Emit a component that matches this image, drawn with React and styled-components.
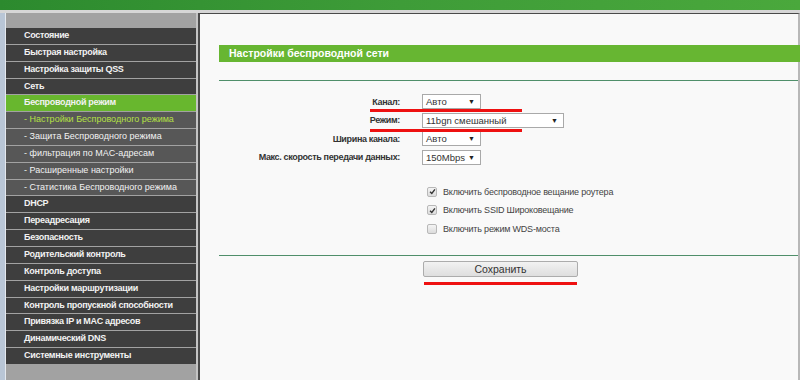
import React from "react";
import styled, { createGlobalStyle } from "styled-components";

const GlobalStyle = createGlobalStyle`
  html, body { margin: 0; padding: 0; }
  body {
    width: 800px;
    height: 380px;
    overflow: hidden;
    background: #f9f9f9;
    font-family: "Liberation Sans", Arial, sans-serif;
  }
`;

const Page = styled.div`
  width: 800px;
  height: 380px;
  display: flex;
  flex-direction: column;
`;

const TopBar = styled.div`
  height: 10px;
  background: linear-gradient(90deg, #2c8a2e 0%, #3e9c38 50%, #4aa83c 100%);
  border-bottom: 3px solid #d6d6d6;
`;

const Body = styled.div`
  flex: 1;
  display: flex;
`;

const EdgeStrip = styled.div`
  width: 5px;
  background: #b9c6d6;
  border-right: 1px solid #e4e8ee;
`;

const Sidebar = styled.nav`
  width: 190px;
  background: #a2a2a2;
  padding-top: 15px;
  display: flex;
  flex-direction: column;
  gap: 1px;
  border-right: 2px solid #c4c4c4;
`;

const MenuItem = styled.div`
  height: 15.85px;
  line-height: 15.85px;
  padding-left: 18px;
  font-size: 9px;
  font-weight: ${(p) => (p.$sub ? "normal" : "bold")};
  letter-spacing: ${(p) => (p.$sub ? "0" : "-0.3px")};
  color: ${(p) => (p.$current ? "#b4e046" : "#f2f2f2")};
  background: ${(p) => (p.$active ? "#68b72e" : p.$sub ? "#575757" : "#3e3e3e")};
  white-space: nowrap;
`;

const Main = styled.main`
  flex: 1;
  border-left: 2px solid #4a4a4a;
  border-top: 1px solid #4a4a4a;
  border-right: 2px solid #b8b8b8;
  padding: 31px 0 0 19px;
  display: flex;
  flex-direction: column;
`;

const TitleBar = styled.div`
  height: 17px;
  line-height: 17px;
  margin-right: -3px;
  padding-left: 10px;
  background: #67b632;
  color: #fff;
  font-size: 10.5px;
  font-weight: bold;
`;

const GreenRule = styled.div`
  height: 1px;
  background: #4f8f6a;
  margin-top: ${(p) => p.$top}px;
`;

const Form = styled.div`
  position: relative;
  display: grid;
  grid-template-columns: 181px auto;
  column-gap: 22px;
  row-gap: 3.5px;
  align-items: center;
  padding-top: 13px;
`;

const Label = styled.div`
  text-align: right;
  font-size: 9px;
  font-weight: bold;
  letter-spacing: -0.35px;
  color: #333;
`;

const Select = styled.div`
  width: ${(p) => p.$w}px;
  height: 15px;
  box-sizing: border-box;
  border: 1px solid #a9a9a9;
  background: #fff;
  display: flex;
  align-items: center;
  justify-content: space-between;
  padding: 0 5px 0 3px;
  font-size: 9.5px;
  color: #333;
`;

const Arrow = styled.span`
  font-size: 7px;
  color: #222;
`;

const RedMark = styled.div`
  position: absolute;
  left: ${(p) => p.$left}px;
  top: ${(p) => p.$top}px;
  width: ${(p) => p.$w}px;
  height: 3px;
  background: #ee1111;
`;

const Checks = styled.div`
  display: flex;
  flex-direction: column;
  gap: 8.5px;
  padding: 22px 0 0 208px;
`;

const CheckRow = styled.label`
  display: flex;
  align-items: center;
  gap: 6px;
  font-size: 9px;
  letter-spacing: -0.2px;
  color: #444;
  height: 10px;
`;

const Box = styled.span`
  width: 8px;
  height: 8px;
  border: 1px solid #b8b8b8;
  border-radius: 2px;
  background: linear-gradient(#f4f4f4, #dcdcdc);
  display: flex;
  align-items: center;
  justify-content: center;
`;

const ButtonArea = styled.div`
  display: flex;
  flex-direction: column;
  padding: 5px 0 0 204px;
  gap: 5px;
`;

const SaveButton = styled.button`
  width: 155px;
  height: 16px;
  padding: 0;
  border: 1px solid #acacac;
  border-radius: 2px;
  background: linear-gradient(#f2f2f2, #dedede);
  font-family: "Liberation Sans", Arial, sans-serif;
  font-size: 10.5px;
  color: #333;
`;

const ButtonMark = styled.div`
  width: 153px;
  margin-left: 1px;
  height: 3px;
  background: #ee1111;
`;

const menu = [
  { t: "Состояние" },
  { t: "Быстрая настройка" },
  { t: "Настройка защиты QSS" },
  { t: "Сеть" },
  { t: "Беспроводной режим", active: true },
  { t: "- Настройки Беспроводного режима", sub: true, current: true },
  { t: "- Защита Беспроводного режима", sub: true },
  { t: "- фильтрация по MAC-адресам", sub: true },
  { t: "- Расширенные настройки", sub: true },
  { t: "- Статистика Беспроводного режима", sub: true },
  { t: "DHCP" },
  { t: "Переадресация" },
  { t: "Безопасность" },
  { t: "Родительский контроль" },
  { t: "Контроль доступа" },
  { t: "Настройки маршрутизации" },
  { t: "Контроль пропускной способности" },
  { t: "Привязка IP и MAC адресов" },
  { t: "Динамический DNS" },
  { t: "Системные инструменты" },
];

const fields = [
  { label: "Канал:", value: "Авто", w: 59 },
  { label: "Режим:", value: "11bgn смешанный", w: 142 },
  { label: "Ширина канала:", value: "Авто", w: 59 },
  { label: "Макс. скорость передачи данных:", value: "150Mbps", w: 59 },
];

const checks = [
  { t: "Включить беспроводное вещание роутера", on: true },
  { t: "Включить SSID Широковещание", on: true },
  { t: "Включить режим WDS-моста", on: false },
];

const Tick = () => (
  <svg width="7" height="7" viewBox="0 0 8 8">
    <path d="M1.2 4.2 L3.2 6.2 L6.8 1.6" fill="none" stroke="#333" strokeWidth="1.6" />
  </svg>
);

export default function App() {
  return (
    <Page>
      <GlobalStyle />
      <TopBar />
      <Body>
        <EdgeStrip />
        <Sidebar>
          {menu.map((m) => (
            <MenuItem key={m.t} $sub={m.sub} $active={m.active} $current={m.current}>
              {m.t}
            </MenuItem>
          ))}
        </Sidebar>
        <Main>
          <TitleBar>Настройки беспроводной сети</TitleBar>
          <GreenRule $top={18} />
          <Form>
            {fields.map((f) => (
              <React.Fragment key={f.label}>
                <Label>{f.label}</Label>
                <Select $w={f.w}>
                  <span>{f.value}</span>
                  <Arrow>▼</Arrow>
                </Select>
              </React.Fragment>
            ))}
            <RedMark $left={151} $top={28} $w={152} />
            <RedMark $left={151} $top={48} $w={152} />
          </Form>
          <Checks>
            {checks.map((c) => (
              <CheckRow key={c.t}>
                <Box>{c.on && <Tick />}</Box>
                {c.t}
              </CheckRow>
            ))}
          </Checks>
          <GreenRule $top={21} />
          <ButtonArea>
            <SaveButton>Сохранить</SaveButton>
            <ButtonMark />
          </ButtonArea>
        </Main>
      </Body>
    </Page>
  );
}
